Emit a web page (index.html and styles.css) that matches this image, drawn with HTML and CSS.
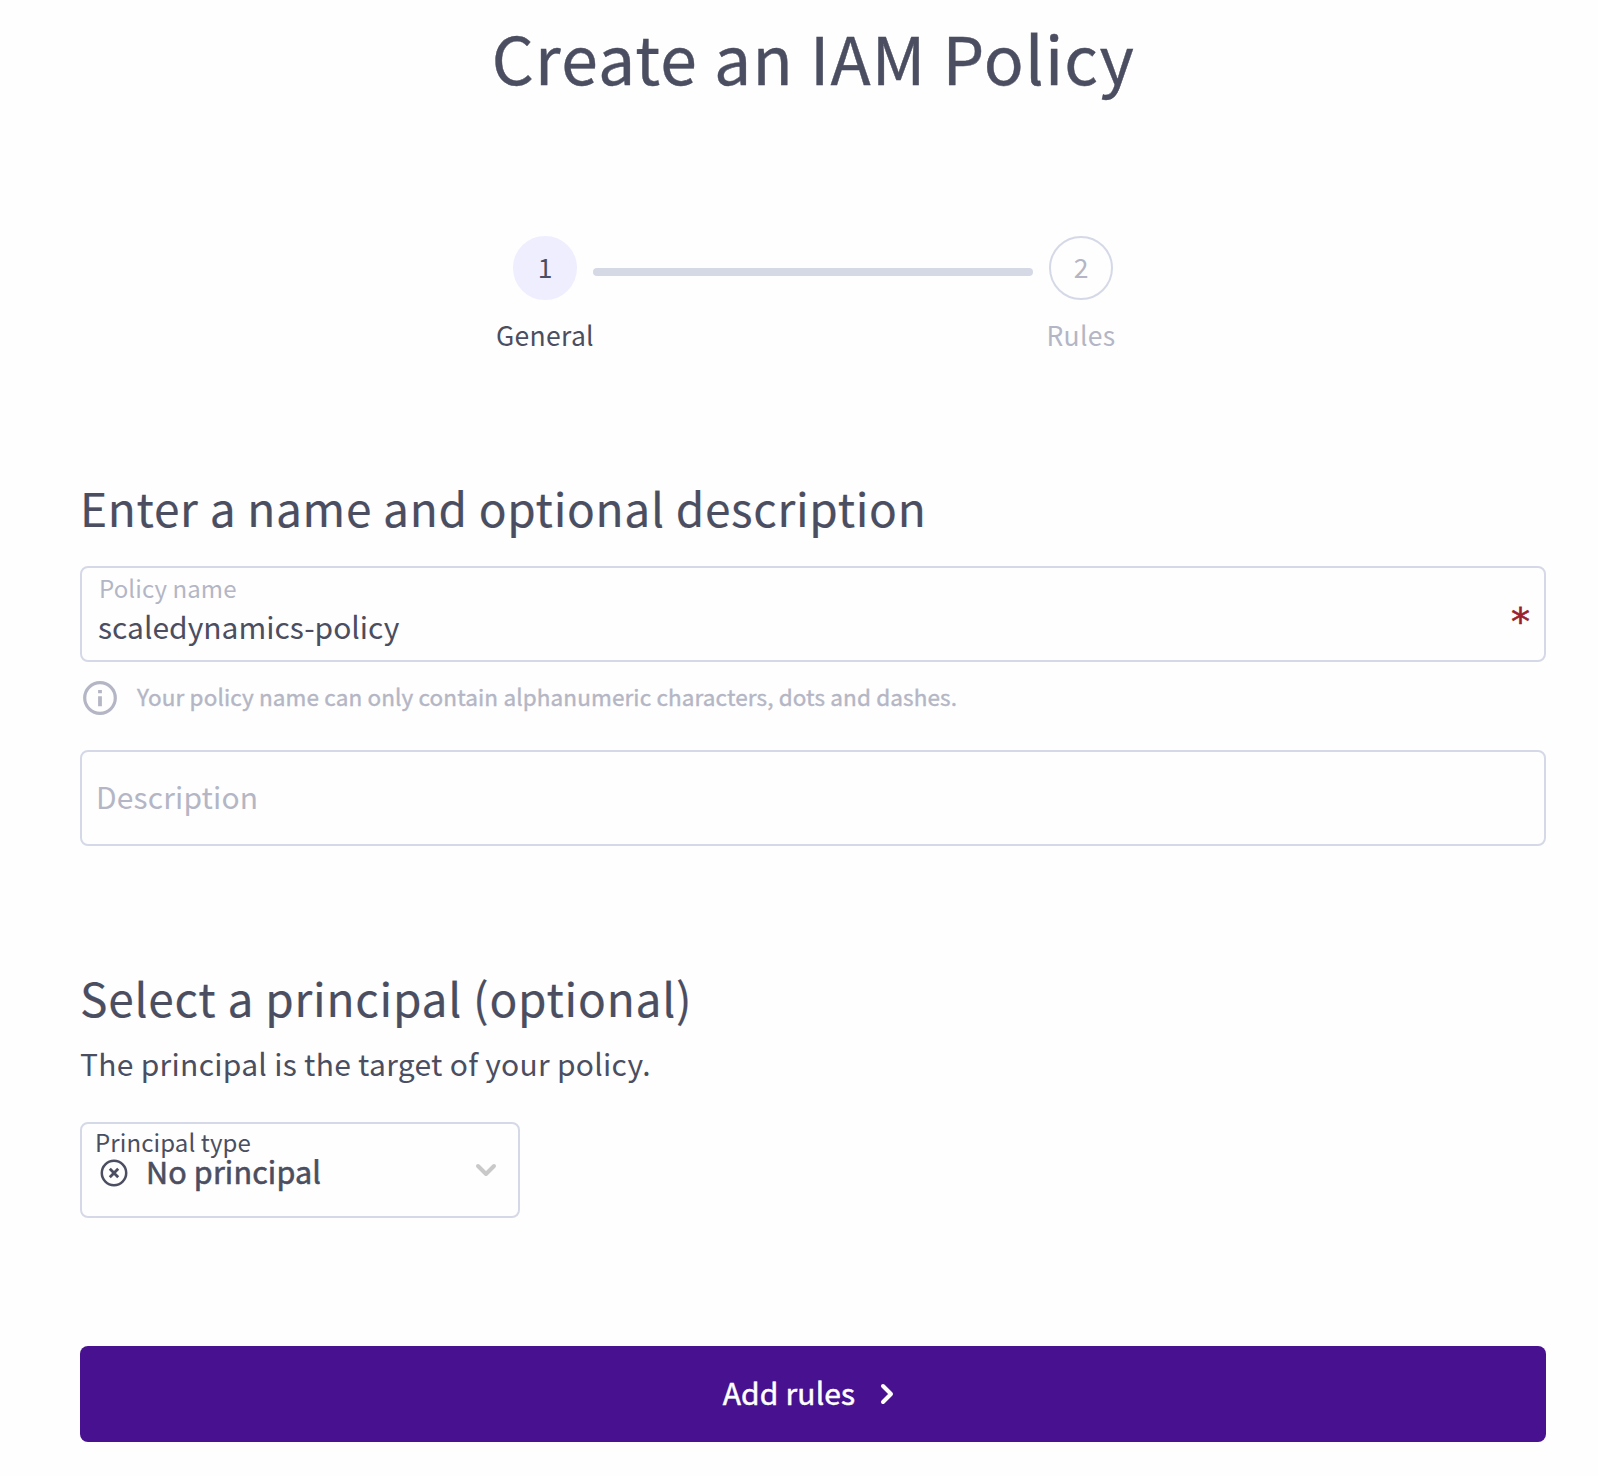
FILE: index.html
```html
<!DOCTYPE html>
<html lang="en">
<head>
<meta charset="utf-8">
<title>Create an IAM Policy</title>
<link rel="stylesheet" href="styles.css">
</head>
<body>
<main class="page">
  <h1 class="title">Create an IAM Policy</h1>

  <ol class="stepper">
    <li class="step step-active"><span class="step-number">1</span><span class="step-label">General</span></li>
    <li class="step-line"></li>
    <li class="step"><span class="step-number">2</span><span class="step-label">Rules</span></li>
  </ol>

  <section class="section">
    <h2 class="heading">Enter a name and optional description</h2>
    <div class="field field-name">
      <div class="field-body">
        <span class="field-label">Policy name</span>
        <span class="field-value">scaledynamics-policy</span>
      </div>
      <span class="required">*</span>
    </div>
    <p class="hint">
      <svg class="hint-icon" width="34" height="34" viewBox="0 0 34 34" fill="none" stroke="currentColor" stroke-width="3.2">
        <circle cx="17" cy="17" r="15.3"/>
        <path d="M17 15.2v10M17 9v3.2" stroke-width="3.8"/>
      </svg>
      <span>Your policy name can only contain alphanumeric characters, dots and dashes.</span>
    </p>
    <div class="field field-description"><span class="placeholder">Description</span></div>
  </section>

  <section class="section section-principal">
    <h2 class="heading heading-principal">Select a principal (optional)</h2>
    <p class="lead">The principal is the target of your policy.</p>
    <div class="field select">
      <div class="select-body">
        <span class="select-label">Principal type</span>
        <span class="select-value">
          <svg class="none-icon" width="28" height="28" viewBox="0 0 28 28" fill="none" stroke="currentColor" stroke-width="2.5">
            <circle cx="14" cy="14" r="12.2"/>
            <path d="M9.8 9.8l8.4 8.4M18.2 9.8l-8.4 8.4" stroke-width="2.8"/>
          </svg>
          <span>No principal</span>
        </span>
      </div>
      <svg class="select-arrow" width="22" height="14" viewBox="0 0 22 14" fill="none" stroke="currentColor" stroke-width="4" stroke-linecap="round" stroke-linejoin="round"><path d="M3 3l8 8 8-8"/></svg>
    </div>
  </section>

  <button class="submit" type="button">
    <span class="submit-text">Add rules</span>
    <svg width="14" height="22" viewBox="0 0 14 22" fill="none" stroke="currentColor" stroke-width="4" stroke-linecap="round" stroke-linejoin="round"><path d="M3 3l8 8-8 8"/></svg>
  </button>
</main>
</body>
</html>
```
FILE: styles.css
```css
* { box-sizing: border-box; }
body {
  margin: 0;
  background: #fefefe;
  color: #4b4e61;
  font-family: "Noto Sans CJK SC", "Noto Sans", sans-serif;
  font-weight: 400;
}
h1, h2, p, ol { margin: 0; padding: 0; font-weight: 400; }
svg { display: block; flex: none; }

.page { padding: 16px 52px 34px 80px; }
.title {
  padding-left: 1px;
  font-size: 66px;
  line-height: 80px;
  letter-spacing: 1.2px;
  text-align: center;
  -webkit-text-stroke: 0.4px currentColor;
}

.stepper {
  display: flex;
  justify-content: center;
  gap: 16px;
  margin-top: 140px;
  list-style: none;
}
.step {
  display: flex;
  flex-direction: column;
  align-items: center;
  gap: 19px;
  width: 64px;
  color: #b4b6c5;
  font-size: 26.5px;
}
.step-number {
  width: 64px;
  height: 64px;
  padding-bottom: 4px;
  border: 2px solid #d5d9e7;
  border-radius: 50%;
  line-height: 58px;
  text-align: center;
}
.step-label { line-height: 32px; letter-spacing: 0.3px; }
.step-active { color: #4b4e61; }
.step-active .step-number { border-color: #efeeff; background: #efeeff; }
.step-line {
  width: 440px;
  height: 8px;
  margin-top: 32px;
  border-radius: 4px;
  background: #d5d9e6;
}

.section { margin-top: 128px; }
.section-principal { margin-top: 123px; }
.heading { font-size: 46px; line-height: 56px; letter-spacing: 0.7px; -webkit-text-stroke: 0.2px currentColor; }
.heading-principal { letter-spacing: 0.77px; }

.field {
  display: flex;
  height: 96px;
  border: 2px solid #d5d9e7;
  border-radius: 8px;
}
.field-name {
  justify-content: space-between;
  margin-top: 31px;
  padding: 6px 14px 0 16px;
}
.field-body { display: flex; flex-direction: column; gap: 6px; }
.field-label { padding-left: 1px; color: #b4b6c5; font-size: 24px; line-height: 28px; letter-spacing: 0.1px; }
.field-value { font-size: 30px; line-height: 36px; }
.required {
  padding-top: 26px;
  color: #9b1f2e;
  font-family: "DejaVu Sans", sans-serif;
  font-size: 38px;
  line-height: 44px;
  -webkit-text-stroke: 0.6px currentColor;
}
.hint {
  display: flex;
  gap: 20px;
  margin-top: 14px;
  padding-left: 3px;
  color: #b4b6c5;
  font-size: 22.5px;
  line-height: 40px;
  letter-spacing: 0.12px;
  -webkit-text-stroke: 0.4px currentColor;
}
.hint-icon { margin-top: 5px; }
.field-description { align-items: center; margin-top: 34px; padding: 0 14px 4px; }
.placeholder { color: #b4b6c5; font-size: 30px; letter-spacing: 0.15px; }

.lead { margin-top: 18px; font-size: 30px; line-height: 40px; letter-spacing: 0.29px; }
.select {
  justify-content: space-between;
  width: 440px;
  margin-top: 39px;
  padding: 4px 21px 0 12px;
}
.select-body { display: flex; flex-direction: column; }
.select-label { padding-left: 1px; font-size: 24px; line-height: 28px; letter-spacing: 0.1px; }
.select-value {
  display: flex;
  gap: 18px;
  padding-left: 6px;
  font-size: 30.5px;
  line-height: 31px;
  letter-spacing: 0.15px;
  -webkit-text-stroke: 0.6px currentColor;
}
.none-icon { margin-top: 3px; }
.select-arrow { margin-top: 35px; color: #c9c9c9; }

.submit {
  display: flex;
  align-items: center;
  justify-content: center;
  gap: 25px;
  width: 100%;
  height: 96px;
  margin-top: 128px;
  padding: 0 9px 0 0;
  border: 0;
  border-radius: 8px;
  background: #47118f;
  color: #fff;
  font: inherit;
  font-size: 30px;
  letter-spacing: 0.15px;
}
.submit-text { padding-bottom: 4px; -webkit-text-stroke: 0.5px currentColor; }
```
